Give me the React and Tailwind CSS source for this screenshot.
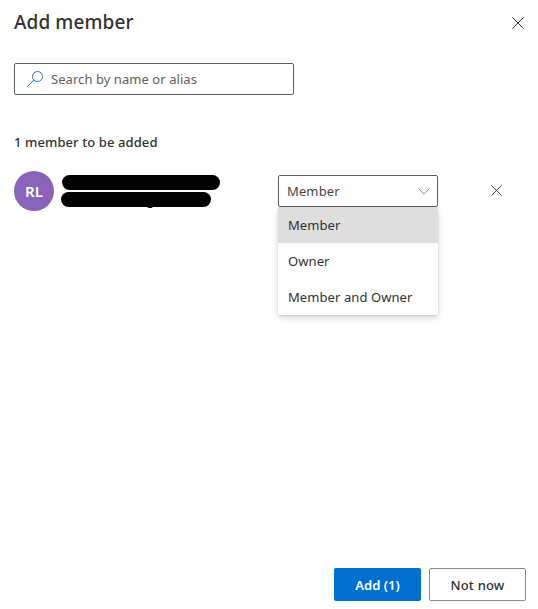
import React from "react";

function CloseIcon({ className }) {
  return (
    <svg viewBox="0 0 12 12" className={className} fill="none" stroke="#333" strokeWidth="1">
      <path d="M0.4 0.4 11.6 11.6M11.6 0.4 0.4 11.6" />
    </svg>
  );
}

function SearchIcon() {
  return (
    <svg viewBox="0 0 16 16" className="h-4 w-4 shrink-0" fill="none" stroke="#2b6cc8" strokeWidth="1">
      <circle cx="10.5" cy="5.5" r="5" />
      <path d="M7 9 0.4 15.6" />
    </svg>
  );
}

function RoleSelect() {
  return (
    <div className="relative ml-[58px] w-40">
      <button className="flex h-8 w-full items-center justify-between rounded-xs border border-[#605e5c] bg-white pr-[7px] pl-2 text-[#484644]">
        <span className="pt-0.5 tracking-[0.12px]">Member</span>
        <svg viewBox="0 0 12 7" className="h-[7px] w-3" fill="none" stroke="#8a8886" strokeWidth="1">
          <path d="M0.4 0.5 6 6.1 11.6 0.5" />
        </svg>
      </button>
      <ul className="absolute top-8 left-0 w-40 rounded-b-xs bg-white tracking-[0.08px] text-[#323130] shadow-[0_3px_7px_rgba(0,0,0,0.14),0_1px_2px_rgba(0,0,0,0.12)]">
        <li className="flex h-9 items-center bg-[#dedede] pt-0.5 pl-2.5">Member</li>
        <li className="flex h-9 items-center pt-0.5 pl-2.5">Owner</li>
        <li className="flex h-9 items-center pt-0.5 pl-2.5">Member and Owner</li>
      </ul>
    </div>
  );
}

export default function App() {
  return (
    <div className="flex h-[609px] w-[538px] flex-col bg-white px-3.5 font-['Noto_Sans','Open_Sans',sans-serif] text-[13px] text-[#323130]">
      <header className="flex h-[46px] items-center justify-between">
        <h1 className="pb-0.5 text-[19px] leading-6 font-medium tracking-[0.1px]">Add member</h1>
        <button aria-label="Close"><CloseIcon className="h-3 w-3" /></button>
      </header>
      <div className="mt-[17px] flex h-8 w-[280px] items-center gap-2 rounded-xs border border-[#605e5c] pl-3 text-[#605e5c]">
        <SearchIcon />
        <span className="pt-0.5 tracking-[0.06px]">Search by name or alias</span>
      </div>
      <h2 className="mt-[37px] h-5 leading-5 font-medium tracking-[0.1px]">1 member to be added</h2>
      <div className="mt-[18px] flex h-[42px] items-center">
        <div className="flex h-10 w-10 items-center justify-center rounded-full bg-[#8764b8] text-[15px] font-semibold text-white">RL</div>
        <div className="ml-[7px] flex w-[159px] flex-col gap-0.5">
          <div className="ml-px h-[15px] w-[158px] rounded-full bg-black" />
          <div className="relative h-[15px] w-[150px] rounded-full bg-black">
            <div className="absolute -bottom-px left-[86px] h-1 w-1.5 rounded-full bg-black" />
          </div>
        </div>
        <RoleSelect />
        <button aria-label="Remove" className="mb-0.5 ml-[53px]"><CloseIcon className="h-[11px] w-[11px]" /></button>
      </div>
      <footer className="mt-auto mb-2 flex justify-end gap-2 font-medium">
        <button className="h-[33px] w-[87px] rounded-xs bg-[#0070d0] pt-[3px] font-semibold text-white">Add (1)</button>
        <button className="-mr-0.5 h-[33px] w-[97px] rounded-xs border border-[#8a8886] bg-white pt-[3px] tracking-[0.2px]">Not now</button>
      </footer>
    </div>
  );
}
